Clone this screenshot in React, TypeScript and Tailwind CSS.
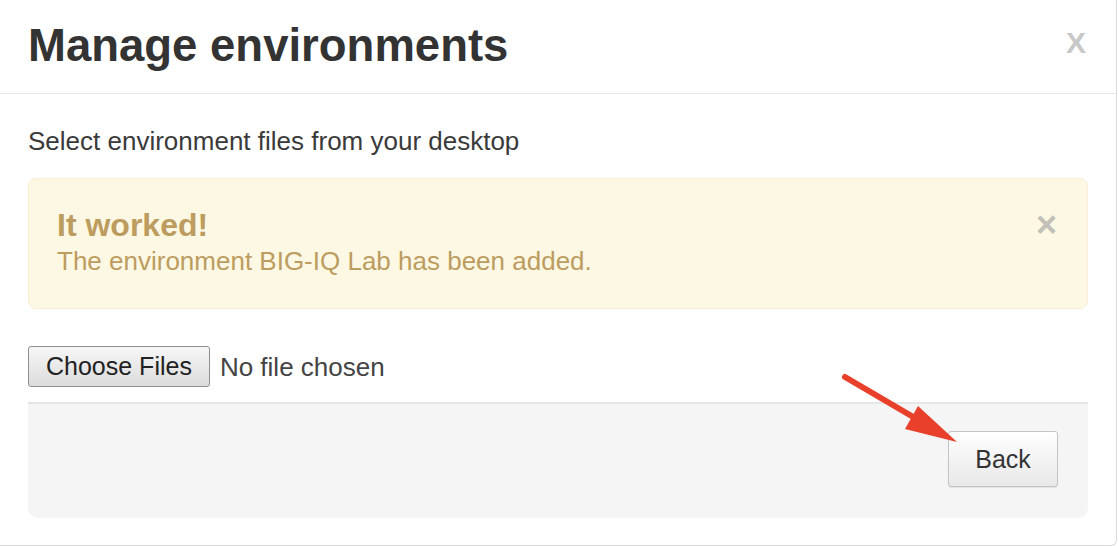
export default function App() {
  return (
    <div className="relative w-[1118px] h-[546px] bg-white overflow-hidden font-['Liberation_Sans',Arial,sans-serif] text-[#333]">
      <div className="w-[1117px] h-[546px] border-r border-b border-[#dcdcdc] rounded-br-[6px] flex flex-col">
        {/* Header */}
        <div className="h-[94px] shrink-0 flex items-center justify-between pl-[28px] pr-[30px] border-b border-[#e8e8e8]">
          <h1 className="text-[45.5px] leading-none font-bold text-[#333] -mt-[2px]">Manage environments</h1>
          <span className="text-[30px] leading-none font-bold text-[#c8c8c8] -mt-[8px]">X</span>
        </div>

        {/* Body */}
        <div className="px-[28px] pt-[32px]">
          <p className="text-[26px] leading-[30px] text-[#3a3a3a]">Select environment files from your desktop</p>

          <div className="mt-[22px] h-[131px] rounded-[8px] border border-[#fbeed5] bg-[#fcf8e3] pl-[28px] pr-[30px] pt-[28px] flex items-start justify-between text-[#bd9c5f]">
            <div>
              <h2 className="text-[32px] leading-[36px] font-bold">It worked!</h2>
              <p className="mt-[3px] text-[26px] leading-[30px]">The environment BIG-IQ Lab has been added.</p>
            </div>
            <span className="text-[36px] leading-none font-bold text-[#c2c0b8] mt-[0px]">×</span>
          </div>

          <div className="mt-[37px] flex items-center gap-[10px]">
            <button className="h-[41px] px-[17px] text-[25px] leading-none text-[#222] border border-[#8f8f8f] rounded-[3px] bg-gradient-to-b from-[#f7f7f7] to-[#dcdcdc]">
              Choose Files
            </button>
            <span className="text-[26px] leading-none text-[#444]">No file chosen</span>
          </div>

          <div className="mt-[15px] h-[116px] border-t-2 border-[#e6e6e6] bg-[#f5f5f5] rounded-b-[10px] flex items-start justify-end pt-[27px] pr-[30px]">
            <button className="w-[110px] h-[56px] text-[25px] leading-none text-[#333] border border-[#c4c4c4] rounded-[3px] bg-gradient-to-b from-[#ffffff] to-[#e8e8e8] shadow-[0_1px_1px_rgba(0,0,0,0.08)]">
              Back
            </button>
          </div>
        </div>
      </div>

      {/* Annotation arrow */}
      <svg className="absolute left-0 top-0 pointer-events-none" width="1118" height="546">
        <line x1="845" y1="377" x2="915" y2="418" stroke="#e8402a" strokeWidth="6" strokeLinecap="round" />
        <polygon points="918,406 905,429 957,442" fill="#e8402a" />
      </svg>
    </div>
  );
}
